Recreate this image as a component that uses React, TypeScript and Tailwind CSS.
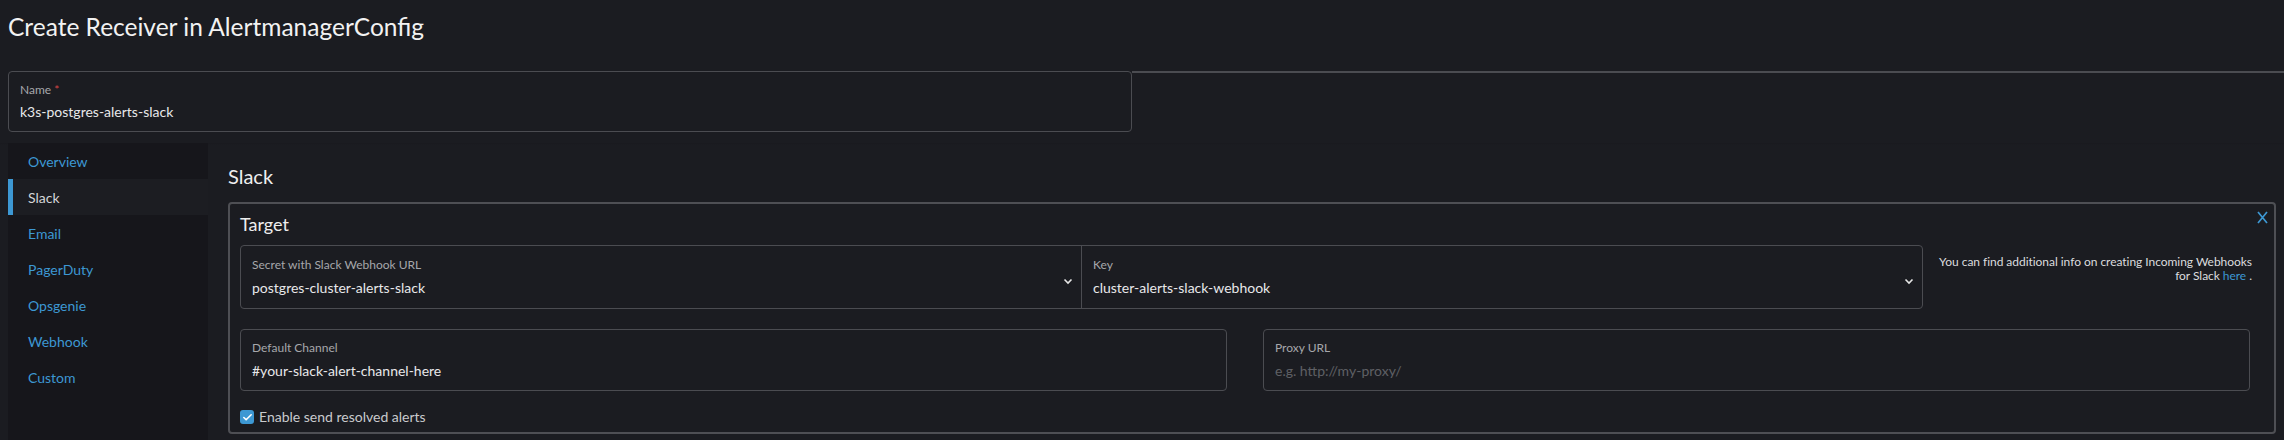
import { Check } from "lucide-react";

const NAV = ["Overview", "Slack", "Email", "PagerDuty", "Opsgenie", "Webhook", "Custom"];

function Chevron() {
  return (
    <svg width="10" height="7" viewBox="0 0 10 7" className="shrink-0">
      <path d="M1.5 1.5 L5 5 L8.5 1.5" fill="none" stroke="#e6e6e6" strokeWidth="1.6" />
    </svg>
  );
}

function Field({
  label,
  value,
  placeholder,
  className,
  chevron,
}: {
  label: string;
  value?: string;
  placeholder?: string;
  className: string;
  chevron?: boolean;
}) {
  return (
    <div className={`flex h-[62px] items-center pl-[11px] pr-[8px] ${className}`}>
      <div className="flex min-w-0 flex-1 flex-col">
        <span className="text-[12px] leading-[16px] text-[#a6a7ab]">{label}</span>
        <span
          className={`mt-[6px] text-[14px] leading-[18px] ${
            value ? "text-[#e8e8ea]" : "text-[#5f6065]"
          }`}
        >
          {value ?? placeholder}
        </span>
      </div>
      {chevron && (
        <div className="mt-[8px]">
          <Chevron />
        </div>
      )}
    </div>
  );
}

export default function App() {
  return (
    <div className="h-[440px] w-[2284px] overflow-hidden bg-[#1b1c21] font-['Lato',sans-serif]">
      <div className="flex h-[71px] items-start pl-[8px] pt-[12px]">
        <h1 className="text-[24.5px] leading-[30px] text-[#f2f2f2]">Create Receiver in AlertmanagerConfig</h1>
      </div>

      <div className="flex pl-[8px]">
        <div className="flex h-[61px] w-[1124px] flex-col justify-center rounded-[4px] border border-[#4b4c51] pl-[11px]">
          <span className="text-[12px] leading-[16px] text-[#a6a7ab]">
            Name <span className="text-[#d64545]">*</span>
          </span>
          <span className="mt-[5px] text-[14px] leading-[18px] text-[#e8e8ea]">k3s-postgres-alerts-slack</span>
        </div>
        <div className="flex-1 border-t-2 border-[#4b4c51]" />
      </div>

      <div className="mt-[11px] flex h-[300px] bg-gradient-to-b from-[#19191e] to-[#1b1c21] bg-[length:100%_2px] bg-no-repeat pl-[8px]">
        <nav className="flex w-[200px] flex-col bg-[#16161b]">
          {NAV.map((item) => {
            const active = item === "Slack";
            return (
              <div
                key={item}
                className={`flex h-[36px] items-center text-[14px] ${
                  active
                    ? "border-l-[5px] border-[#3d98d3] bg-[#1c1d22] pl-[15px] text-[#d4d5d8]"
                    : "pl-[20px] text-[#3d98d3]"
                }`}
              >
                {item}
              </div>
            );
          })}
        </nav>

        <main className="flex-1 pl-[20px]">
          <h2 className="pt-[21px] text-[20px] leading-[24px] text-[#eeeeef]">Slack</h2>

          <section className="relative mt-[14px] h-[232px] w-[2048px] rounded-[4px] border-2 border-[#4e4f54] pl-[10px] pr-[22px]">
            <svg
              width="11"
              height="13"
              viewBox="0 0 11 13"
              className="absolute right-[6px] top-[7px]"
            >
              <path d="M1 1 L10 12 M10 1 L1 12" stroke="#3d98d3" strokeWidth="1.7" />
            </svg>

            <h3 className="pt-[9px] text-[18px] leading-[22px] text-[#eeeeef]">Target</h3>

            <div className="mt-[10px] flex">
              <div className="flex w-[1683px] shrink-0 rounded-[4px] border border-[#4b4c51]">
                <Field
                  label="Secret with Slack Webhook URL"
                  value="postgres-cluster-alerts-slack"
                  chevron
                  className="w-[841px] border-r border-[#4b4c51]"
                />
                <Field
                  label="Key"
                  value="cluster-alerts-slack-webhook"
                  chevron
                  className="flex-1"
                />
              </div>
              <p className="flex-1 whitespace-nowrap pt-[10px] text-right text-[12px] leading-[14px] tracking-[-0.04px] text-[#dcdcdf]">
                You can find additional info on creating Incoming Webhooks
                <br />
                for Slack <span className="text-[#3d98d3]">here</span> .
              </p>
            </div>

            <div className="mt-[20px] flex w-[2010px] gap-[36px]">
              <Field
                label="Default Channel"
                value="#your-slack-alert-channel-here"
                className="flex-1 rounded-[4px] border border-[#4b4c51]"
              />
              <Field
                label="Proxy URL"
                placeholder="e.g. http://my-proxy/"
                className="flex-1 rounded-[4px] border border-[#4b4c51]"
              />
            </div>

            <label className="mt-[17px] flex items-center gap-[5px]">
              <span className="flex h-[14px] w-[14px] items-center justify-center rounded-[3px] bg-[#3d98d3]">
                <Check className="h-[11px] w-[11px] text-white" strokeWidth={3.5} />
              </span>
              <span className="text-[14px] leading-[18px] text-[#c9cacd]">Enable send resolved alerts</span>
            </label>
          </section>
        </main>
      </div>
    </div>
  );
}
